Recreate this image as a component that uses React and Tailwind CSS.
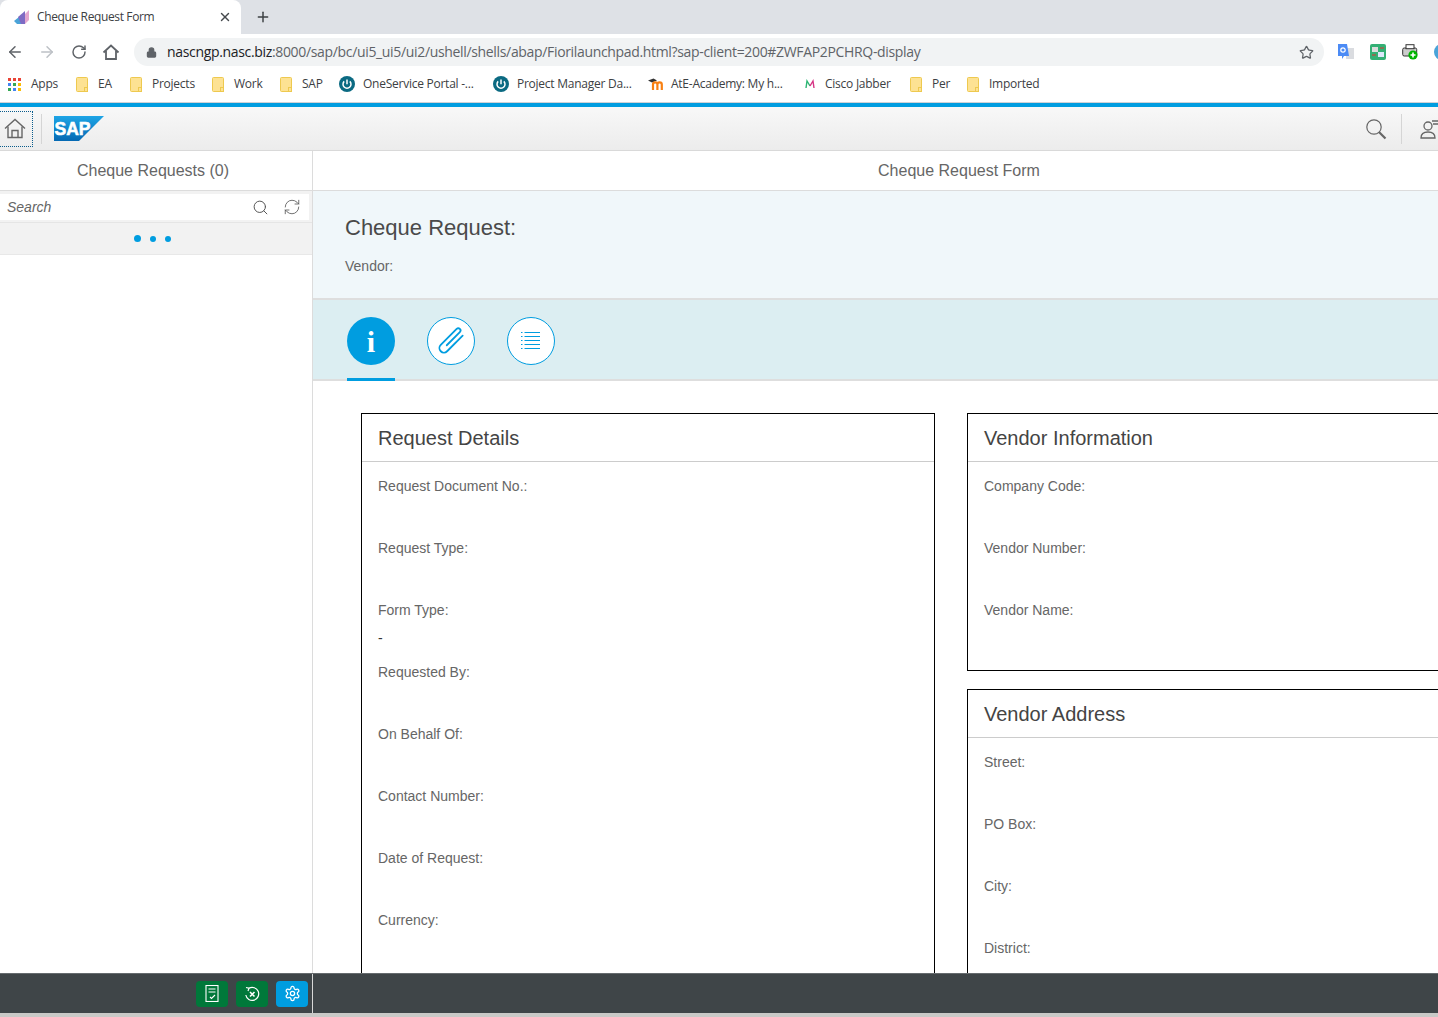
import React from "react";
import { ArrowLeft, ArrowRight, RotateCw, Lock, Star, X, Plus, Search, RefreshCw } from "lucide-react";

const Folder = () => (
  <svg width="12" height="15" viewBox="0 0 12 15"><rect x="0.5" y="0.5" width="11" height="14" rx="1" fill="#fde293" stroke="#eec94f" /><rect x="8.5" y="10.5" width="3" height="4" fill="#fde293" stroke="#eec94f" /></svg>
);
const Power = () => (
  <svg width="16" height="16" viewBox="0 0 16 16"><circle cx="8" cy="8" r="8" fill="#0b6a82" /><path d="M5.2 5.4a4 4 0 1 0 5.6 0" fill="none" stroke="#fff" strokeWidth="1.5" /><path d="M8 3.6v4.6" stroke="#fff" strokeWidth="1.5" /></svg>
);
const Grid = () => {
  const c = ["#ea4335", "#ea4335", "#ea4335", "#4285f4", "#34a853", "#fbbc04", "#34a853", "#4285f4", "#fbbc04"];
  return (
    <div className="grid grid-cols-3 gap-[2px] w-[13px]">
      {c.map((x, i) => <div key={i} className="w-[3px] h-[3px]" style={{ background: x }} />)}
    </div>
  );
};
const Moodle = () => (
  <svg width="18" height="14" viewBox="0 0 18 14"><path d="M0 3.5 5.5 1.5 9 3.5 4 5.5Z" fill="#333" /><path d="M5 13V7.5a2.2 2.2 0 0 1 4.4 0V13M9.4 13V7.5a2.2 2.2 0 0 1 4.4 0V13" fill="none" stroke="#f98012" strokeWidth="2.2" /></svg>
);
const Jabber = () => (
  <svg width="12" height="10" viewBox="0 0 12 10"><path d="M2 9 3 2l3 5" fill="none" stroke="#2bb673" strokeWidth="1.4" /><path d="M6 7l3-5 1 7" fill="none" stroke="#d63384" strokeWidth="1.4" /></svg>
);

const bookmarks = [
  { w: "w-[68px]", s: "w-[23px]", icon: <Grid />, t: "Apps" },
  { w: "w-[54px]", s: "w-[22px]", icon: <Folder />, t: "EA" },
  { w: "w-[82px]", s: "w-[22px]", icon: <Folder />, t: "Projects" },
  { w: "w-[68px]", s: "w-[22px]", icon: <Folder />, t: "Work" },
  { w: "w-[59px]", s: "w-[22px]", icon: <Folder />, t: "SAP" },
  { w: "w-[154px]", s: "w-[24px]", icon: <Power />, t: "OneService Portal -..." },
  { w: "w-[155px]", s: "w-[24px]", icon: <Power />, t: "Project Manager Da..." },
  { w: "w-[156px]", s: "w-[23px]", icon: <Moodle />, t: "AtE-Academy: My h..." },
  { w: "w-[106px]", s: "w-[21px]", icon: <Jabber />, t: "Cisco Jabber" },
  { w: "w-[57px]", s: "w-[22px]", icon: <Folder />, t: "Per" },
  { w: "w-[80px]", s: "w-[22px]", icon: <Folder />, t: "Imported" },
];

const ui = "[font-family:'Open_Sans','Noto_Sans',sans-serif]";
const sap = "[font-family:'Liberation_Sans',Arial,sans-serif]";

function Field({ label, value }) {
  return (
    <div className="h-[62px] pt-[16px] pl-4">
      <div className="text-sm leading-4 text-[#666666]">{label}</div>
      {value && <div className="mt-[12px] text-sm leading-4 text-[#333333]">{value}</div>}
    </div>
  );
}

function Card({ title, fields, className }) {
  return (
    <div className={"border border-black " + className}>
      <div className="h-[48px] flex items-center pl-4 border-b border-[#cccccc] text-xl text-[#444444]">{title}</div>
      {fields.map((f) => <Field key={f.label} {...f} />)}
    </div>
  );
}

export default function App() {
  return (
    <div className={"relative w-[1438px] h-[1017px] overflow-hidden flex flex-col bg-white " + sap}>
      {/* browser tabs */}
      <div className={"h-[34px] shrink-0 bg-[#dee1e6] flex items-end " + ui}>
        <div className="w-[241px] h-[34px] bg-white rounded-t-lg flex items-center pl-[14px] pr-[9px]">
          <svg width="16" height="16" viewBox="0 0 16 16">
            <path d="M0 12 5 8 8 15H3Z" fill="#4aa3d8" />
            <path d="M4 8 11 2 11 15H7Z" fill="#7e6bc4" />
            <path d="M11 5 15 1 15 11 11 15Z" fill="#e3a6cf" />
          </svg>
          <span className="ml-[7px] text-xs text-[#3c4043] tracking-[-0.37px] flex-1">Cheque Request Form</span>
          <X size={14} strokeWidth={2.4} className="text-[#45494d]" />
        </div>
        <div className="ml-[14px] h-[34px] flex items-center"><Plus size={16} strokeWidth={2.2} className="text-[#3c4043]" /></div>
      </div>
      {/* toolbar */}
      <div className={"h-[33px] shrink-0 bg-white flex items-center pt-[3px] " + ui}>
        <div className="w-[134px] shrink-0 flex items-center text-[#5f6368]">
          <div className="w-[32px] -ml-px flex justify-center"><ArrowLeft size={18} strokeWidth={2} /></div>
          <div className="w-[32px] flex justify-center"><ArrowRight size={18} strokeWidth={2} className="text-[#bdc1c6]" /></div>
          <div className="w-[32px] flex justify-center"><RotateCw size={16} strokeWidth={2.2} /></div>
          <div className="w-[32px] flex justify-center">
            <svg width="18" height="18" viewBox="0 0 18 18" fill="none" stroke="#5f6368" strokeWidth="1.8"><path d="M1.5 9.5 9 2.5l7.5 7" /><path d="M4 8v8h10V8" /></svg>
          </div>
        </div>
        <div className="w-[1190px] shrink-0 h-[28px] rounded-full bg-[#f1f3f4] flex items-center pl-[12px] pr-[10px]">
          <Lock size={11} strokeWidth={2.5} fill="#5f6368" className="text-[#5f6368] shrink-0" />
          <span className="ml-[10px] text-sm tracking-[-0.335px] text-[#5f6368] flex-1 whitespace-nowrap"><span className="text-[#202124]">nascngp.nasc.biz</span>:8000/sap/bc/ui5_ui5/ui2/ushell/shells/abap/Fiorilaunchpad.html?sap-client=200#ZWFAP2PCHRQ-display</span>
          <Star size={15} strokeWidth={2} className="text-[#5f6368] shrink-0" />
        </div>
        <div className="ml-[14px] shrink-0 flex items-center gap-[16px]">
          <svg width="16" height="16" viewBox="0 0 16 16"><rect x="8" y="4" width="8" height="11" fill="#dadce0" /><path d="M0 0h9l2 12H6l-2 3v-3H0Z" fill="#4c8bf5" /><circle cx="5" cy="6" r="2.2" fill="none" stroke="#fff" strokeWidth="1.2" /></svg>
          <svg width="16" height="16" viewBox="0 0 16 16"><rect width="16" height="16" rx="2" fill="#34b075" /><rect x="2" y="3" width="6" height="5" fill="#ddd" /><rect x="8" y="8" width="6" height="5" fill="#dde8fb" /><path d="M10 4h4M2 11h4" stroke="#d33" strokeWidth="1" /></svg>
          <svg width="16" height="16" viewBox="0 0 16 16"><rect x="0.7" y="4" width="14" height="8" rx="1.5" fill="#ccc" stroke="#333" /><rect x="4" y="0.7" width="8" height="4" fill="#fff" stroke="#333" /><circle cx="11" cy="11" r="4.6" fill="#00b300" /><path d="M11 8.5v5M8.5 11h5" stroke="#fff" strokeWidth="1.6" /></svg>
          <div className="w-[16px] h-[16px] rounded-full bg-[#4aa3d8] shrink-0" />
        </div>
      </div>
      {/* bookmarks */}
      <div className={"h-[36px] shrink-0 bg-white flex items-center pl-[8px] pb-[1px] border-b border-[#d0d2d6] text-xs text-[#3c4043] " + ui}>
        {bookmarks.map((b) => (
          <div key={b.t + b.w} className={"flex items-center shrink-0 whitespace-nowrap " + b.w}>
            <div className={"shrink-0 flex items-center " + b.s}>{b.icon}</div>
            <span className="tracking-[-0.25px]">{b.t}</span>
          </div>
        ))}
      </div>
      <div className="h-[4px] shrink-0 bg-[#009de0]" />
      {/* shell header */}
      <div className="h-[44px] shrink-0 flex items-center bg-gradient-to-b from-[#f8f8f8] to-[#ececec] border-b border-[#d9d9d9]">
        <div className="w-[33px] h-[36px] border border-dotted border-[#0a5c8c] flex items-center justify-center border-l-0 pr-[3px]">
          <svg width="22" height="21" viewBox="0 0 22 21" fill="none" stroke="#666" strokeWidth="1.4"><path d="M1 10.5 11 1.500l10 9" /><path d="M4 8.500V19.500h14V8.500" /><path d="M8 19.500v-7h6v7" /></svg>
        </div>
        <div className="w-px h-[30px] bg-[#d5d5d5] ml-[8px]" />
        <svg className="ml-[12px]" width="50" height="25" viewBox="0 0 50 25">
          <defs><linearGradient id="g" x1="0" y1="0" x2="0" y2="1"><stop offset="0" stopColor="#1ea5e6" /><stop offset="1" stopColor="#0569b3" /></linearGradient></defs>
          <polygon points="0,0 50,0 25,25 0,25" fill="url(#g)" />
          <text x="0.500" y="19" fontFamily="Liberation Sans" fontWeight="700" fontSize="19" fill="#fff" stroke="#fff" strokeWidth="0.600" textLength="36" lengthAdjust="spacingAndGlyphs">SAP</text>
        </svg>
        <div className="flex-1" />
        <svg width="22" height="22" viewBox="0 0 22 22" fill="none" stroke="#666"><circle cx="9" cy="9" r="7.200" strokeWidth="1.200" /><path d="M14 14l6.500 6.500" strokeWidth="2.200" /></svg>
        <div className="w-px h-[30px] bg-[#d5d5d5] ml-[14px]" />
        <svg className="ml-[18px] shrink-0" width="18" height="24" viewBox="0 0 18 24" fill="none" stroke="#666" strokeWidth="1.300"><circle cx="8" cy="9" r="4" /><path d="M1 21c0-4 2-6 7-6s7 2 7 6Z" /><path d="M12 4h6M13 7h5" /></svg>
      </div>
      {/* main */}
      <div className="flex-1 min-h-0 flex overflow-hidden">
        <div className="w-[313px] shrink-0 border-r border-[#dcdcdc] flex flex-col">
          <div className="h-[40px] flex items-center justify-center pr-[6px] border-b border-[#dcdcdc] text-base text-[#666666]">Cheque Requests (0)</div>
          <div className="h-[32px] bg-[#f2f2f2] pr-[3px] pt-[3px] pb-[2px] border-b border-[#e5e5e5]">
            <div className="h-[26px] bg-white flex items-center pl-[7px] pr-[8px]">
              <span className="text-sm italic text-[#666666] flex-1">Search</span>
              <Search size={17} strokeWidth={1.4} className="text-[#555555]" />
              <RefreshCw size={18} strokeWidth={1.1} className="ml-[14px] text-[#555555]" />
            </div>
          </div>
          <div className="h-[32px] bg-[#f2f2f2] border-b border-[#e8e8e8] flex items-center justify-center gap-[9px] pr-[7px]">
            <div className="w-[7px] h-[7px] rounded-full bg-[#009de0]" />
            <div className="w-[6px] h-[6px] rounded-full bg-[#009de0]" />
            <div className="w-[6px] h-[6px] rounded-full bg-[#009de0]" />
          </div>
        </div>
        <div className="w-[1292px] shrink-0 flex flex-col">
          <div className="h-[40px] shrink-0 flex items-center justify-center border-b border-[#dcdcdc] text-base text-[#666666]">Cheque Request Form</div>
          <div className="h-[107px] shrink-0 bg-[#f0f7fa] pl-[32px] pt-[23px]">
            <div className="text-[22px] leading-[28px] text-[#4a4a4a]">Cheque Request:</div>
            <div className="mt-[16px] text-sm leading-4 text-[#666666]">Vendor:</div>
          </div>
          <div className="h-[83px] shrink-0 bg-[#dceef2] border-y-2 border-[#dedede] pl-[34px] flex gap-[32px]">
            <div className="w-[48px] h-[81px] border-b-[3px] -mb-[2px] border-[#009de0] pt-[17px] shrink-0">
              <div className="w-[48px] h-[48px] rounded-full bg-[#009de0] flex items-center justify-center text-white text-[30px] font-bold [font-family:'Liberation_Serif',serif]">i</div>
            </div>
            <div className="pt-[17px] shrink-0">
              <div className="w-[48px] h-[48px] rounded-full bg-white border border-[#009de0] flex items-center justify-center">
                <svg width="26" height="26" viewBox="0 0 26 26" fill="none" stroke="#009de0" strokeWidth="1.8" strokeLinecap="round" className="overflow-visible"><g transform="rotate(-45 13 13)"><path d="M25 17.500H3a4.500 4.500 0 0 1 0-9H25.500a2.250 2.250 0 0 1 0 4.500H7" /></g></svg>
              </div>
            </div>
            <div className="pt-[17px] shrink-0">
              <div className="w-[48px] h-[48px] rounded-full bg-white border border-[#009de0] flex items-center justify-center">
                <svg width="20" height="20" viewBox="0 0 20 20" stroke="#009de0" strokeWidth="1.200"><path d="M0 1.500h1.500M3.500 1.500H19M0 5.500h1.500M3.500 5.500H19M0 9.500h1.500M3.500 9.500H19M0 13.500h1.500M3.500 13.500H19M0 17.500h1.500M3.500 17.500H19" /></svg>
              </div>
            </div>
          </div>
          <div className="pl-[48px] pt-[32px] flex gap-[32px] items-start">
            <Card
              className="w-[574px] shrink-0 h-[640px]"
              title="Request Details"
              fields={[
                { label: "Request Document No.:" },
                { label: "Request Type:" },
                { label: "Form Type:", value: "-" },
                { label: "Requested By:" },
                { label: "On Behalf Of:" },
                { label: "Contact Number:" },
                { label: "Date of Request:" },
                { label: "Currency:" },
              ]}
            />
            <div className="w-[574px] shrink-0 flex flex-col gap-[18px]">
              <Card className="h-[258px]" title="Vendor Information" fields={[{ label: "Company Code:" }, { label: "Vendor Number:" }, { label: "Vendor Name:" }]} />
              <Card className="h-[340px]" title="Vendor Address" fields={[{ label: "Street:" }, { label: "PO Box:" }, { label: "City:" }, { label: "District:" }]} />
            </div>
          </div>
        </div>
      </div>
      {/* footer */}
      <div className="h-[40px] shrink-0 bg-[#3f4548] border-t border-[#666b6e] flex">
        <div className="w-[313px] shrink-0 border-r border-[#d8d8d8] flex items-center justify-end gap-[8px] pr-[4px]">
          <div className="w-[32px] h-[26px] rounded-sm bg-[#00783a] flex items-center justify-center">
            <svg width="14" height="17" viewBox="0 0 14 17" fill="none" stroke="#fff" strokeWidth="1.100"><rect x="1" y="0.500" width="12" height="16" /><path d="M3.500 4h7M3.500 7h7M5 12l1.500 1.500L10 10" /></svg>
          </div>
          <div className="w-[32px] h-[26px] rounded-sm bg-[#00783a] flex items-center justify-center">
            <svg width="16" height="16" viewBox="0 0 16 16" fill="none" stroke="#fff" strokeWidth="1.200"><path d="M5 2.200A6.500 6.500 0 1 1 1.800 9" /><path d="M2 1.500 5 2.200 4 5" /><path d="M6 6l4.500 4.500M10.500 6 6 10.500" strokeWidth="1.600" /></svg>
          </div>
          <div className="w-[32px] h-[26px] rounded-sm bg-[#009de0] flex items-center justify-center">
            <svg width="17" height="17" viewBox="0 0 24 24" fill="none" stroke="#fff" strokeWidth="1.800"><path d="M12.220 2h-.440a2 2 0 0 0-2 2v.180a2 2 0 0 1-1 1.730l-.430.250a2 2 0 0 1-2 0l-.150-.080a2 2 0 0 0-2.730.730l-.220.380a2 2 0 0 0 .730 2.730l.150.100a2 2 0 0 1 1 1.720v.510a2 2 0 0 1-1 1.740l-.150.090a2 2 0 0 0-.730 2.730l.220.380a2 2 0 0 0 2.730.730l.150-.080a2 2 0 0 1 2 0l.430.250a2 2 0 0 1 1 1.730V20a2 2 0 0 0 2 2h.440a2 2 0 0 0 2-2v-.180a2 2 0 0 1 1-1.730l.430-.250a2 2 0 0 1 2 0l.150.080a2 2 0 0 0 2.730-.730l.220-.390a2 2 0 0 0-.730-2.730l-.150-.080a2 2 0 0 1-1-1.740v-.500a2 2 0 0 1 1-1.740l.150-.090a2 2 0 0 0 .730-2.730l-.220-.380a2 2 0 0 0-2.730-.730l-.150.080a2 2 0 0 1-2 0l-.430-.250a2 2 0 0 1-1-1.730V4a2 2 0 0 0-2-2z" /><circle cx="12" cy="12" r="3" /></svg>
          </div>
        </div>
      </div>
      <div className="h-[4px] shrink-0 bg-[#c9c9c7]" />
    </div>
  );
}
